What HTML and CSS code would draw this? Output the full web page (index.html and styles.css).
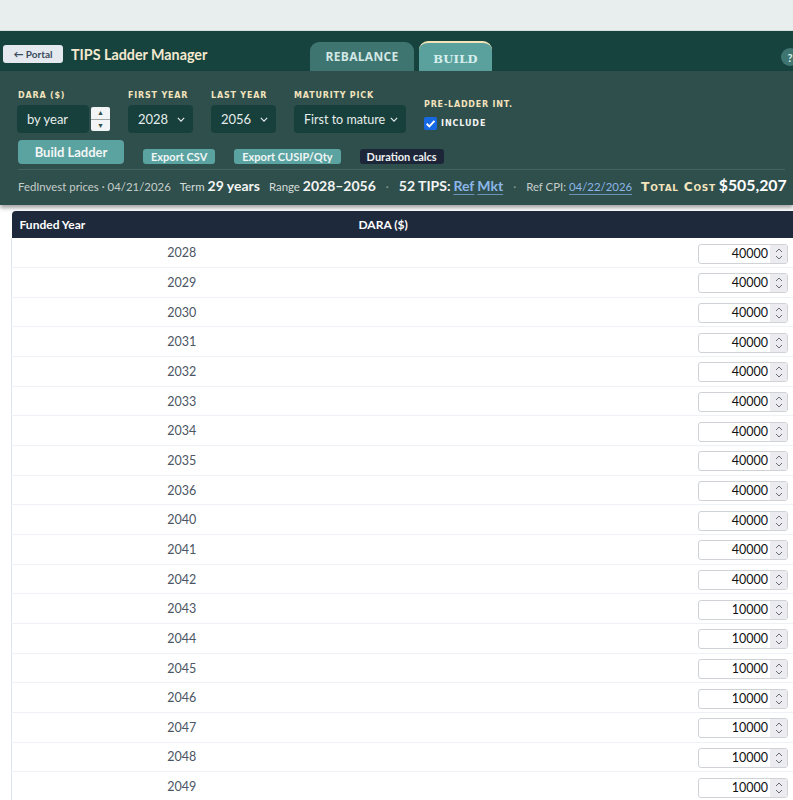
FILE: index.html
```html
<!DOCTYPE html>
<html>
<head>
<meta charset="utf-8">
<link rel="stylesheet" href="styles.css">
</head>
<body>
<div class="topband"></div>
<header class="bar">
  <button class="portal">← Portal</button>
  <h1 class="title">TIPS Ladder Manager</h1>
  <nav class="tabs">
    <div class="tab">REBALANCE</div>
    <div class="tab active">BUILD</div>
  </nav>
  <div class="help">?</div>
</header>
<section class="controls">
  <div class="fields">
    <div class="field">
      <div class="label">DARA ($)</div>
      <div class="dara">
        <div class="box w72">by year</div>
        <div class="stepper"><span>▲</span><span>▼</span></div>
      </div>
    </div>
    <div class="field">
      <div class="label">FIRST YEAR</div>
      <div class="box sel w65">2028<svg class="chev" viewBox="0 0 10 6"><path d="M1 1l4 4 4-4" fill="none" stroke="#e8efee" stroke-width="1.4"/></svg></div>
    </div>
    <div class="field">
      <div class="label">LAST YEAR</div>
      <div class="box sel w65">2056<svg class="chev" viewBox="0 0 10 6"><path d="M1 1l4 4 4-4" fill="none" stroke="#e8efee" stroke-width="1.4"/></svg></div>
    </div>
    <div class="field">
      <div class="label">MATURITY PICK</div>
      <div class="box sel w112">First to mature<svg class="chev" viewBox="0 0 10 6"><path d="M1 1l4 4 4-4" fill="none" stroke="#e8efee" stroke-width="1.4"/></svg></div>
    </div>
    <div class="field pre">
      <div class="label">PRE-LADDER INT.</div>
      <label class="check"><span class="cb"><svg viewBox="0 0 12 12"><path d="M2.5 6.2l2.4 2.4 4.8-5" fill="none" stroke="#fff" stroke-width="1.8"/></svg></span>INCLUDE</label>
    </div>
  </div>
  <div class="actions">
    <button class="build">Build Ladder</button>
    <button class="small">Export CSV</button>
    <button class="small">Export CUSIP/Qty</button>
    <button class="small dark">Duration calcs</button>
  </div>
  <div class="status">
    <span class="muted">FedInvest prices · 04/21/2026</span>
    <span>Term <b>29 years</b></span>
    <span>Range <b>2028–2056</b></span>
    <span class="dot">·</span>
    <span><b>52 TIPS:</b> <a class="lnk b">Ref</a> <a class="lnk b">Mkt</a></span>
    <span class="dot">·</span>
    <span class="muted">Ref CPI: <a class="lnk">04/22/2026</a></span>
    <span class="total"><span class="tl">Total Cost</span> <b>$505,207</b></span>
  </div>
</section>
<main class="wrap">
  <table class="grid">
    <thead><tr><th class="c1">Funded Year</th><th class="c2">DARA ($)</th></tr></thead>
    <tbody id="rows"></tbody>
  </table>
</main>
<script src="app.js"></script>
</body>
</html>
```
FILE: app.js
```js
var data = [[2028,40000],[2029,40000],[2030,40000],[2031,40000],[2032,40000],[2033,40000],[2034,40000],[2035,40000],[2036,40000],[2040,40000],[2041,40000],[2042,40000],[2043,10000],[2044,10000],[2045,10000],[2046,10000],[2047,10000],[2048,10000],[2049,10000]];
var tb = document.getElementById('rows');
var html = '';
data.forEach(function(d){
  html += '<tr><td class="yr">' + d[0] + '</td><td class="amt"><div class="num"><span class="v">' + d[1] + '</span><span class="spin"><svg viewBox="0 0 8 14"><path d="M1 5l3-3 3 3M1 9l3 3 3-3" fill="none" stroke="#6b6b73" stroke-width="1"/></svg></span></div></td></tr>';
});
tb.innerHTML = html;
```
FILE: styles.css
```css
* { box-sizing: border-box; }
html, body { margin: 0; padding: 0; background: #fff; }
body { font-family: Lato, "Open Sans", sans-serif; overflow: hidden; }
.topband { height: 31px; background: #e8eded; border-bottom: 1px solid #d5dcdc; }

.bar { height: 40px; background: #17433f; display: flex; align-items: flex-end; position: relative; }
.portal { align-self: center; margin: 6px 0 0 3px; width: 60px; height: 18px; padding: 0; border: none; border-radius: 3px; background: #e4e9f0; color: #3b4a5c; font: bold 10px Lato, sans-serif; }
.title { align-self: center; margin: 7px 0 0 8px; width: 239px; font: bold 14.3px Lato, sans-serif; color: #f4ead0; }
.tabs { display: flex; gap: 5px; align-items: flex-end; }
.tab { width: 104px; height: 29px; border-radius: 9px 9px 0 0; background: #3f7571; color: #d2e8e4; font: bold 12px "Open Sans", sans-serif; letter-spacing: 0.3px; display: flex; align-items: center; justify-content: center; }
.tab.active { width: 73px; height: 30px; background: #5aa19e; border-top: 2px solid #f3e3b6; color: #d6eeec; font-family: "DejaVu Serif", serif; font-size: 11.5px; padding-top: 3px; }
.help { position: absolute; right: -6px; top: 17px; width: 18px; height: 18px; border-radius: 50%; background: #3f7571; color: #d8efec; font: bold 11px Lato, sans-serif; display: flex; align-items: center; justify-content: center; }

.controls { background: #2f4f4d; padding: 20px 5px 12px 18px; box-shadow: 0 3px 4px rgba(0,0,0,0.35); position: relative; height: 134px; }
.fields { display: flex; align-items: flex-start; }
.field { display: flex; flex-direction: column; gap: 5px; margin-right: 18px; }
.label { font: bold 8px "DejaVu Sans", sans-serif; letter-spacing: 0.8px; color: #f2e3bd; line-height: 9px; white-space: nowrap; }
.dara { display: flex; align-items: center; gap: 2px; margin-left: -1px; }
.box { height: 28px; background: #173f3b; border-radius: 4px; color: #e6eeec; font: 13px Lato, sans-serif; display: flex; align-items: center; padding-left: 10px; position: relative; }
.w72 { width: 72px; }
.w65 { width: 65px; padding-left: 10px; }
.w112 { width: 112px; padding-left: 10px; font-size: 12.5px; }
.sel .chev { position: absolute; right: 8px; top: 12px; width: 8px; height: 5px; }
.stepper { width: 19px; height: 24px; background: #f3f4f6; border-radius: 2px; display: flex; flex-direction: column; }
.stepper span { flex: 1; font-size: 7px; color: #2f4f4d; display: flex; align-items: center; justify-content: center; line-height: 1; }
.stepper span + span { border-top: 1px solid #9aa5a4; }
.field.pre { margin-top: 9px; margin-left: 0; gap: 8px; }
.check { display: flex; align-items: center; gap: 4px; font: bold 8px "DejaVu Sans", sans-serif; letter-spacing: 0.9px; color: #f3f4f2; }
.cb { width: 13px; height: 13px; border-radius: 2px; background: #1668e3; display: flex; }
.cb svg { width: 13px; height: 13px; }

.actions { display: flex; align-items: flex-end; gap: 19px; margin-top: 7px; height: 24px; }
.build { width: 106px; height: 24px; border: none; border-radius: 4px; background: #5ba3a0; color: #f2f6f5; font: bold 13px Lato, sans-serif; padding: 0; }
.small { height: 15px; border: none; border-radius: 3px; background: #5ba3a0; color: #f0f6f5; font: bold 11px Lato, sans-serif; padding: 0 8px; }
.dark { background: #1c2638; color: #f1f1f1; padding: 0 7px; }

.status { margin-top: 5px; border-top: 1px solid #426461; padding-top: 5px; display: flex; align-items: baseline; gap: 9px; font: 11.4px Lato, sans-serif; color: #d5dcd8; white-space: nowrap; margin-right: 3px; }
.status b { color: #f3f5f3; font-size: 14px; }
.status .muted { color: #c5cdc9; }
.status .dot { color: #8a9c99; margin: 0 1px; }
.lnk { color: #8cb6e8; text-decoration: underline; text-decoration-color: #6d92b8; text-underline-offset: 3px; }
.lnk.b { font-weight: bold; font-size: 14px; }
.total { margin-left: 0; }
.total .tl { font: bold 12.3px "DejaVu Sans", sans-serif; font-variant: small-caps; letter-spacing: 0.7px; color: #f2e3bd; }
.total b { font-size: 15.8px; color: #fff; }

.wrap { padding: 6px 0 0 11px; }
.grid { width: 785px; border-collapse: collapse; font-family: Lato, sans-serif; }
.grid th { background: #1e293b; color: #fff; font-size: 12px; font-weight: bold; text-align: left; height: 27px; padding: 0; }
.grid th.c1 { width: 340px; padding-left: 8px; border-radius: 4px 0 0 0; }
.grid th.c2 { padding-left: 7px; }
.grid td { height: 29.67px; padding: 0; border-bottom: 1px solid #eef1f5; }
.grid td.yr { text-align: center; color: #4b5563; font-size: 12.5px; border-left: 1px solid #dbe5f1; }
.grid td.amt { text-align: right; padding-right: 8px; }
.num { display: inline-flex; align-items: stretch; width: 90px; height: 20px; border: 1px solid #cfd3d8; border-radius: 3px; background: #fff; vertical-align: middle; }
.num .v { flex: 1; text-align: right; font: 12.5px Lato, sans-serif; color: #111; line-height: 18px; padding-right: 2px; }
.num .spin { width: 17px; background: #ececf0; display: flex; align-items: center; justify-content: center; border-radius: 0 2px 2px 0; }
.num .spin svg { width: 8px; height: 14px; }
```
